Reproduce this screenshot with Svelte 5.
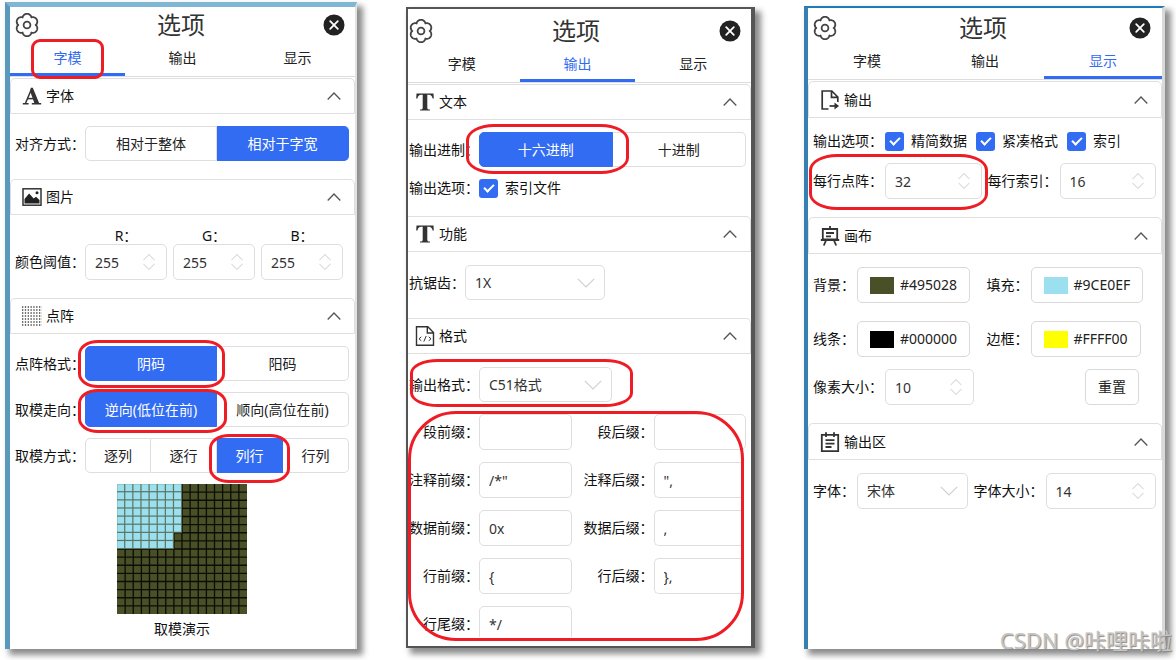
<script>
  const tabs = ['字模', '输出', '显示'];

  let align = $state('相对于字宽');
  let polarity = $state('阴码');
  let direction = $state('逆向(低位在前)');
  let scan = $state('列行');
  let radix = $state('十六进制');

  const channels = [
    { name: 'R', value: 255 },
    { name: 'G', value: 255 },
    { name: 'B', value: 255 }
  ];

  const affixes = [
    { label: '段前缀', value: '' },
    { label: '段后缀', value: '' },
    { label: '注释前缀', value: '/*"' },
    { label: '注释后缀', value: '",', open: true },
    { label: '数据前缀', value: '0x' },
    { label: '数据后缀', value: ',', open: true },
    { label: '行前缀', value: '{' },
    { label: '行后缀', value: '},', open: true },
    { label: '行尾缀', value: '*/' }
  ];

  const colors = [
    { label: '背景', value: '#495028' },
    { label: '填充', value: '#9CE0EF' },
    { label: '线条', value: '#000000' },
    { label: '边框', value: '#FFFF00' }
  ];

  // Six-lobed outline of the settings icon
  const gear = Array.from({ length: 120 }, (_, i) => {
    const a = (i / 120) * Math.PI * 2;
    const r = 8.7 + 2.5 * Math.pow(Math.abs(Math.sin(3 * a)), 0.75);
    return `${i ? 'L' : 'M'}${(12 + r * Math.cos(a)).toFixed(2)} ${(12 + r * Math.sin(a)).toFixed(2)}`;
  }).join('') + 'Z';

  // Demo bitmap: eight columns lit, the last one only for six rows
  const lit = [];
  for (let y = 0; y < 8; y++) {
    for (let x = 0; x < (y < 6 ? 8 : 7); x++) lit.push({ x, y });
  }
  const lines = Array.from({ length: 15 }, (_, i) => i + 1);
</script>

{#snippet head(active)}
  <header class="head">
    <svg class="gear" viewBox="0 0 24 24" aria-hidden="true">
      <path d={gear} fill="none" stroke="#444" stroke-width="1.8" stroke-linejoin="round" />
      <circle cx="12" cy="12" r="3.4" fill="none" stroke="#444" stroke-width="1.8" />
    </svg>
    <h2>选项</h2>
    <button class="close" aria-label="关闭">
      <svg viewBox="0 0 22 22" aria-hidden="true">
        <circle cx="11" cy="11" r="10.5" fill="#222" />
        <path d="M7.2 7.2l7.6 7.6M14.8 7.2l-7.6 7.6" stroke="#fff" stroke-width="1.8" stroke-linecap="round" />
      </svg>
    </button>
  </header>
  <nav class="tabs">
    {#each tabs as tab}
      <button class="tab" class:active={tab === active}>
        <span class="anchor">
          {tab}
          {#if tab === '字模' && active === '字模'}<i class="ring ring-tab"></i>{/if}
        </span>
      </button>
    {/each}
  </nav>
{/snippet}

{#snippet icon(kind)}
  <svg class="icon" viewBox="0 0 20 20" fill="none" stroke="#333" stroke-width="1.4" aria-hidden="true">
    {#if kind === 'font'}
      <path d="M.8 17.800h5.800M9.800 17.800h9.400" stroke-width="1.500" />
      <path d="M3.400 17.500L9.400 3.200" stroke-width="1.500" />
      <path d="M8.800 1.800h2l6.600 16h-4.800L8.200 5.400z" fill="#333" stroke="none" />
      <path d="M5.600 12.600h6.500" stroke-width="1.500" />
    {:else if kind === 'text'}
      <path d="M1.500 1.500h17l.3 5h-1.200c-.6-2.700-1.600-3.600-3.800-3.700h-1.500v13c0 1.400.8 1.700 2.700 1.800v1H5v-1c1.900-.1 2.700-.4 2.700-1.800v-13H6.200C4 2.900 3 3.800 2.400 6.500H1.200z" fill="#333" stroke="none" />
    {:else if kind === 'image'}
      <rect x="1" y="1.800" width="18" height="16.400" stroke-width="1.500" />
      <path d="M2.500 16.500V12l4.600-5.400 4.600 5 2.300-1.800 3.500 3.300v3.400z" fill="#222" stroke="none" />
      <circle cx="15" cy="5.800" r="1.500" fill="#222" stroke="none" />
    {:else if kind === 'matrix'}
      {#each [1, 4, 7, 10, 13, 16, 19] as y}
        <path d="M0 {y}h20" stroke="#444" stroke-width="1.300" stroke-dasharray="1.300 1.530" />
      {/each}
    {:else if kind === 'code'}
      <path d="M1.500 .8h11.300l5.700 5.700V19.200h-17zM12.300 .8v6.200h6.200" />
      <path d="M6.300 10.800l-2.300 2 2.300 2M13.700 10.800l2.300 2-2.300 2M11.200 10l-2.400 5.600" stroke-width="1" />
    {:else if kind === 'export'}
      <path d="M8.500 19H2.200V1h9.600l6 6v5M11.500 1v6.300h6.300" stroke-width="1.700" />
      <path d="M9.500 16h7" stroke-width="1.700" />
      <path d="M14.500 12.600l4.600 3.400-4.600 3.400z" fill="#333" stroke="none" />
    {:else if kind === 'board'}
      <path d="M10 0v3M2.800 3h14.400v10.500H2.800zM.8 14h18.400M6.200 14l-2.400 5.500M13.800 14l2.400 5.500M6 7h8M6 10.300h5" stroke-width="1.800" />
    {:else}
      <path d="M1.800 2.800h16.400v16.400H1.800zM6 .300V5M14 .300V5M5.500 8.200h9M5.500 11.600h9M5.500 15h6" stroke-width="1.800" />
    {/if}
  </svg>
{/snippet}

{#snippet title(kind, text)}
  <h3 class="title">
    {@render icon(kind)}
    <span>{text}</span>
    <svg class="caret" viewBox="0 0 14 8" aria-hidden="true">
      <path d="M.7 7.500L7 1l6.300 6.500" fill="none" stroke="#555" stroke-width="1.300" />
    </svg>
  </h3>
{/snippet}

{#snippet spinner(id, value)}
  <span class="spin">
    <input {id} type="number" {value} />
    <svg viewBox="0 0 14 18" aria-hidden="true">
      <path d="M1.500 7.200L7 1.500l5.500 5.700M1.500 10.800L7 16.500l5.500-5.700" fill="none" stroke="#ddd" stroke-width="1.100" />
    </svg>
  </span>
{/snippet}

{#snippet drop(id, value)}
  <span class="drop">
    <select {id}><option>{value}</option></select>
    <svg viewBox="0 0 18 10" aria-hidden="true">
      <path d="M.8 .8L9 9L17.200 .8" fill="none" stroke="#d0d0d0" stroke-width="1.200" />
    </svg>
  </span>
{/snippet}

{#snippet check(text)}
  <label class="check">
    <input type="checkbox" checked />
    <span>{text}</span>
  </label>
{/snippet}

<main>
  <section class="panel glyph">
    {@render head('字模')}
    {@render title('font', '字体')}
    <div class="body">
      <div class="row">
        <span class="label">对齐方式：</span>
        <div class="group" role="group" aria-label="对齐方式">
          {#each ['相对于整体', '相对于字宽'] as o}
            <button class:on={align === o} onclick={() => (align = o)}>{o}</button>
          {/each}
        </div>
      </div>
    </div>

    {@render title('image', '图片')}
    <div class="body rgb">
      <span class="label">颜色阈值：</span>
      {#each channels as c}
        <div class="channel">
          <label for="ch-{c.name}">{c.name}：</label>
          {@render spinner(`ch-${c.name}`, c.value)}
        </div>
      {/each}
    </div>

    {@render title('matrix', '点阵')}
    <div class="body matrix">
      <div class="row">
        <span class="label">点阵格式：</span>
        <div class="group" role="group" aria-label="点阵格式">
          {#each ['阴码', '阳码'] as o}
            <button class:on={polarity === o} onclick={() => (polarity = o)}>
              {o}{#if o === '阴码'}<i class="ring ring-polarity"></i>{/if}
            </button>
          {/each}
        </div>
      </div>
      <div class="row">
        <span class="label">取模走向：</span>
        <div class="group" role="group" aria-label="取模走向">
          {#each ['逆向(低位在前)', '顺向(高位在前)'] as o, i}
            <button class:on={direction === o} onclick={() => (direction = o)}>
              {o}{#if i === 0}<i class="ring ring-direction"></i>{/if}
            </button>
          {/each}
        </div>
      </div>
      <div class="row">
        <span class="label">取模方式：</span>
        <div class="group" role="group" aria-label="取模方式">
          {#each ['逐列', '逐行', '列行', '行列'] as o}
            <button class:on={scan === o} onclick={() => (scan = o)}>
              {o}{#if o === '列行'}<i class="ring ring-scan"></i>{/if}
            </button>
          {/each}
        </div>
      </div>
      <figure>
        <svg viewBox="0 0 128 128" aria-hidden="true">
          <rect width="128" height="128" fill="#495028" />
          {#each lines as n}
            <path d="M{n * 8} 0V128M0 {n * 8}H128" stroke="#0c0e05" stroke-width="1.300" />
          {/each}
          <path d="M0 0H64V48H56V64H0z" fill="#5b7562" />
          {#each lit as c}
            <rect x={c.x * 8 + 0.2} y={c.y * 8 + 0.2} width="6.800" height="6.800" fill="#9ce0ef" />
          {/each}
        </svg>
        <figcaption>取模演示</figcaption>
      </figure>
    </div>
  </section>

  <section class="panel output">
    {@render head('输出')}
    {@render title('text', '文本')}
    <div class="body radix">
      <div class="row">
        <span class="label">输出进制：</span>
        <div class="group" role="group" aria-label="输出进制">
          {#each ['十六进制', '十进制'] as o, i}
            <button class:on={radix === o} onclick={() => (radix = o)}>
              {o}{#if i === 0}<i class="ring ring-radix"></i>{/if}
            </button>
          {/each}
        </div>
      </div>
      <div class="row options">
        <span class="label">输出选项：</span>
        {@render check('索引文件')}
      </div>
    </div>

    {@render title('text', '功能')}
    <div class="body">
      <div class="row">
        <label class="label" for="antialias">抗锯齿：</label>
        {@render drop('antialias', '1X')}
      </div>
    </div>

    {@render title('code', '格式')}
    <div class="body format">
      <div class="row target">
        <label class="label" for="format">输出格式：</label>
        {@render drop('format', 'C51格式')}
        <i class="ring ring-format"></i>
      </div>
      <div class="circled">
        <div class="affixes">
          {#each affixes as a, i}
            <label for="affix-{i}">{a.label}：</label>
            <input id="affix-{i}" class="text" class:open={a.open} type="text" value={a.value} />
          {/each}
        </div>
        <i class="ring ring-affixes"></i>
      </div>
    </div>
  </section>

  <section class="panel display">
    {@render head('显示')}
    {@render title('export', '输出')}
    <div class="body">
      <div class="row options">
        <span class="label">输出选项：</span>
        {@render check('精简数据')}
        {@render check('紧凑格式')}
        {@render check('索引')}
      </div>
      <div class="row">
        <label class="label" for="dots">每行点阵：</label>
        {@render spinner('dots', 32)}
        <label class="label second" for="indexes">每行索引：</label>
        {@render spinner('indexes', 16)}
        <i class="ring ring-dots"></i>
      </div>
    </div>

    {@render title('board', '画布')}
    <div class="body">
      <div class="swatches">
        {#each colors as c}
          <div class="row">
            <span class="label">{c.label}：</span>
            <button class="color"><i style="background: {c.value}"></i>{c.value}</button>
          </div>
        {/each}
      </div>
      <div class="row pixel">
        <label class="label" for="pixel">像素大小：</label>
        {@render spinner('pixel', 10)}
        <button class="reset">重置</button>
      </div>
    </div>

    {@render title('note', '输出区')}
    <div class="body">
      <div class="row fonts">
        <label class="label" for="family">字体：</label>
        {@render drop('family', '宋体')}
        <label class="label second" for="size">字体大小：</label>
        {@render spinner('size', 14)}
      </div>
    </div>
  </section>
</main>
<p class="mark">CSDN @咔哩咔啦</p>

<style>
  :global(body) {
    margin: 0;
    background: #fff;
  }
  main,
  .mark,
  button,
  input,
  select {
    font-family: 'Noto Sans', 'Noto Sans CJK SC', sans-serif;
    font-size: 14px;
    line-height: 20px;
  }
  main {
    display: grid;
    grid-template-columns: 352fr 349fr 361fr;
    column-gap: 49px;
    min-height: 100vh;
    padding: 0 11px 11px 5px;
    box-sizing: border-box;
    color: #111;
  }
  main *,
  main *::before {
    box-sizing: border-box;
  }

  .panel {
    background: #fff;
    box-shadow: 5px 5px 6px 1px rgba(0, 0, 0, 0.45);
    min-width: 0;
  }
  .glyph {
    margin-top: 2px;
    border: solid #3f86b0;
    border-width: 5px 2px 0 5px;
    border-top-color: #7fb6d4;
    border-left-color: #5a98bc;
    border-right-color: #e2e2e2;
  }
  .output {
    margin: 7px 0 1px;
    border: 2px solid #555;
    border-right-width: 4px;
    padding-top: 4px;
  }
  .display {
    margin-top: 6px;
    border: solid #1f7bb6;
    border-width: 2px 3px 0 4px;
    border-right-color: #d9d9d9;
    border-left-color: #3580b0;
    padding-top: 2px;
  }

  .head {
    display: flex;
    align-items: center;
    justify-content: space-between;
    height: 36px;
    padding: 0 10px 0 5px;
  }
  .head h2 {
    margin: 0;
    font-size: 24px;
    line-height: 36px;
    font-weight: 400;
    color: #333;
  }
  .gear {
    width: 24px;
    height: 24px;
  }
  .close {
    display: flex;
    padding: 0;
    border: 0;
    background: none;
  }
  .close svg {
    width: 22px;
    height: 22px;
  }
  .output .head {
    padding: 0 10px 0 1px;
  }
  .display .head {
    padding: 0 11px 0 5px;
  }

  .tabs {
    display: grid;
    grid-template-columns: repeat(3, 1fr);
    border-bottom: 1px solid #dcdcdc;
  }
  .output .tabs {
    margin-left: -4px;
    clip-path: inset(0 0 0 4px);
  }
  .tab {
    height: 33px;
    padding: 0;
    border: 0;
    border-bottom: 3px solid transparent;
    background: none;
    color: #222;
  }
  .tab.active {
    color: #326cf2;
    border-bottom-color: #326cf2;
  }
  .anchor {
    position: relative;
  }

  .title {
    display: flex;
    align-items: center;
    gap: 4px;
    height: 36px;
    margin: 1px 0 0;
    padding: 0 13px 0 11px;
    border: 1px solid #dfdfdf;
    border-radius: 5px 5px 0 0;
    font-size: 14px;
    font-weight: 400;
    color: #111;
  }
  .display .title {
    height: 37px;
  }
  .output .title {
    border-left: 0;
    border-radius: 0 5px 0 0;
    padding-left: 7px;
  }
  .body + .title {
    margin-top: 0;
  }
  .icon {
    width: 20px;
    height: 20px;
  }
  .caret {
    width: 14px;
    height: 8px;
    margin-left: auto;
  }

  .body {
    display: flex;
    flex-direction: column;
    gap: 12px;
    padding: 12px 6px 18px 5px;
  }
  .matrix {
    gap: 11px;
    padding-bottom: 7px;
  }
  .output .body {
    padding: 13px 5px 18px 1px;
  }
  .output .radix {
    gap: 11px;
    padding-top: 12px;
  }
  .display .body {
    padding: 13px 6px 18px 5px;
  }
  .row {
    display: flex;
    align-items: center;
    position: relative;
  }
  .label {
    flex: none;
    white-space: nowrap;
  }

  .group {
    flex: 1;
    display: grid;
    grid-auto-flow: column;
    grid-auto-columns: 1fr;
  }
  .group button {
    position: relative;
    height: 35px;
    padding: 0;
    border: 1px solid #dedede;
    border-left-width: 0;
    background: #fff;
    color: #222;
    white-space: nowrap;
  }
  .group button:first-child {
    border-left-width: 1px;
    border-radius: 5px 0 0 5px;
  }
  .group button:last-child {
    border-radius: 0 5px 5px 0;
  }
  .group button.on {
    z-index: 1;
    background: #326cf2;
    border-color: #326cf2;
    color: #fff;
  }

  .spin,
  .drop {
    display: grid;
    align-items: center;
  }
  .spin > *,
  .drop > * {
    grid-area: 1 / 1;
  }
  .spin svg {
    justify-self: end;
    width: 14px;
    height: 18px;
    margin-right: 11px;
  }
  .drop svg {
    justify-self: end;
    width: 18px;
    height: 10px;
    margin-right: 10px;
    pointer-events: none;
  }
  .spin input,
  .drop select,
  .text {
    width: 100%;
    min-width: 0;
    height: 36px;
    padding: 0 9px;
    border: 1px solid #dedede;
    border-radius: 5px;
    background: #fff;
    color: #333;
    appearance: none;
  }
  .spin input {
    appearance: textfield;
  }
  .spin input::-webkit-inner-spin-button {
    appearance: none;
  }

  .body.rgb {
    flex-direction: row;
    align-items: flex-end;
    gap: 6px;
    padding-right: 12px;
  }
  .rgb .label {
    line-height: 36px;
    margin-right: -6px;
  }
  .channel {
    flex: 1;
    min-width: 0;
    text-align: center;
  }
  .channel label {
    display: block;
    line-height: 17px;
  }

  figure {
    margin: 0;
    display: flex;
    flex-direction: column;
    align-items: center;
    gap: 5px;
  }
  figure svg {
    width: 130px;
    height: 130px;
  }

  .check {
    display: flex;
    align-items: center;
    gap: 7px;
    margin-right: 9px;
    white-space: nowrap;
  }
  .check input {
    width: 19px;
    height: 19px;
    margin: 0;
    appearance: none;
    border-radius: 3px;
    background: #326cf2;
    display: grid;
    place-items: center;
  }
  .check input::before {
    content: '';
    width: 10px;
    height: 6px;
    margin-bottom: 3px;
    border: solid #fff;
    border-width: 0 0 2px 2px;
    transform: rotate(-45deg);
  }

  .output .drop {
    width: 140px;
  }
  .output .drop select {
    height: 35px;
  }
  .output .format {
    padding: 13px 5px 8px 1px;
  }
  .output .target .drop {
    width: 133px;
  }
  .circled {
    position: relative;
  }
  .affixes {
    display: grid;
    grid-template-columns: 70px 1fr 82px 1fr;
    gap: 12px 0;
    align-items: center;
    height: 223px;
    overflow: hidden;
  }
  .affixes label {
    text-align: right;
    white-space: nowrap;
  }
  .affixes .open {
    width: calc(100% - 3px);
    border-right: 0;
    border-radius: 5px 0 0 5px;
  }

  .display .spin {
    flex: 1;
  }
  .display .label {
    width: 72px;
  }
  .second {
    margin-left: 6px;
  }
  .swatches {
    display: grid;
    grid-template-columns: 1fr 1fr;
    gap: 18px 4px;
  }
  .display .swatches .label,
  .display .fonts .label:first-child {
    width: 44px;
  }
  .color,
  .reset {
    height: 36px;
    padding: 0 12px;
    border: 1px solid #d9d9d9;
    border-radius: 5px;
    background: #fff;
    color: #222;
  }
  .color {
    display: flex;
    align-items: center;
    gap: 6px;
  }
  .color i {
    width: 24px;
    height: 17px;
  }
  .display .pixel .spin {
    flex: 0 1 89px;
  }
  .reset {
    margin: 0 17px 0 auto;
  }
  .fonts .drop,
  .display .fonts .spin {
    flex: 1;
  }

  .ring {
    position: absolute;
    z-index: 2;
    border: 3px solid #ee1c25;
    border-radius: 20px / 14px;
    pointer-events: none;
  }
  .ring-tab {
    inset: -9px -22px -12px -23px;
    border-radius: 9px;
  }
  .ring-polarity {
    inset: -7px -9px -8px -8px;
  }
  .ring-direction {
    inset: -4px -11px -7px -8px;
  }
  .ring-scan {
    inset: -5px -8px -11px -8px;
  }
  .ring-radix {
    inset: -9px -17px -8px -14px;
    border-radius: 28px / 16px;
  }
  .ring-format {
    inset: -8px 113px -5px 1px;
    border-radius: 28px / 14px;
  }
  .ring-affixes {
    inset: -3px 2px -4px -1px;
    border-radius: 48px;
  }
  .ring-dots {
    inset: -9px 168px -11px -4px;
    border-radius: 28px / 16px;
  }

  .mark {
    position: absolute;
    right: 4px;
    bottom: 5px;
    margin: 0;
    font-size: 22px;
    line-height: 30px;
    color: #c4c4c4;
    text-shadow: 1px 1px 1px #888;
  }
</style>
